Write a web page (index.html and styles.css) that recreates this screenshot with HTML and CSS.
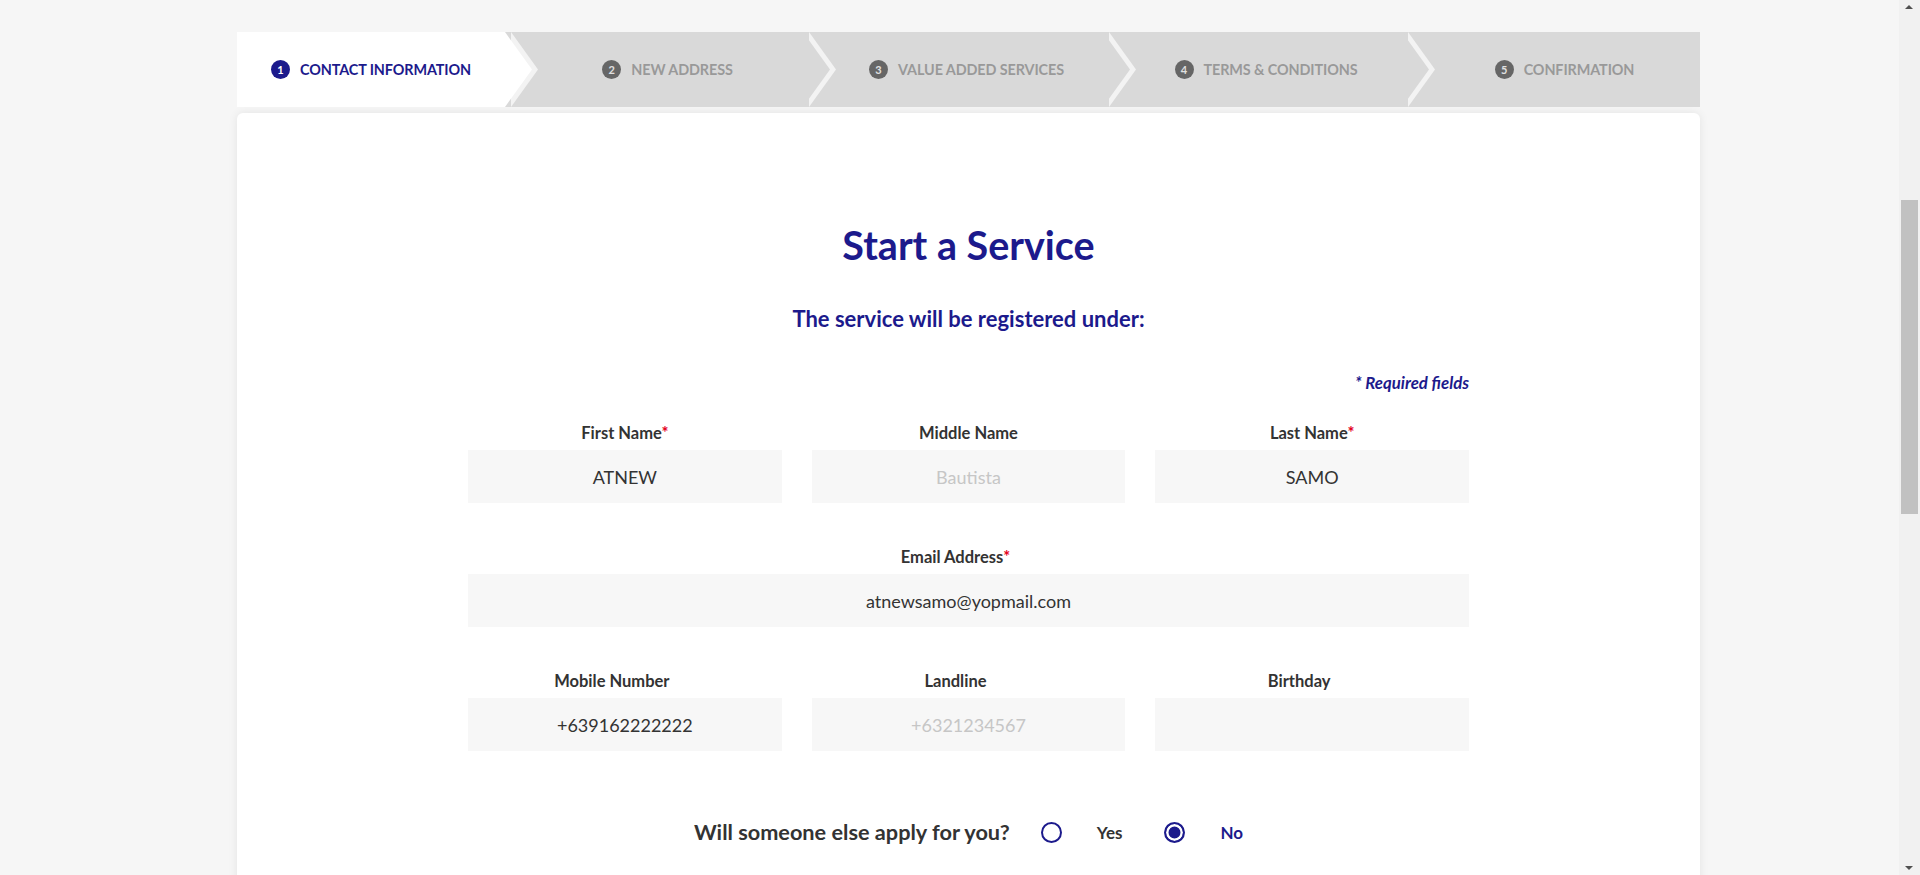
FILE: index.html
```html
<!DOCTYPE html>
<html lang="en">
<head>
<meta charset="utf-8">
<title>Start a Service</title>
<link rel="stylesheet" href="styles.css">
</head>
<body>
<div class="page">
  <main class="wizard">
    <ol class="stepper">
      <li class="step step-active"><span class="step-num">1</span><span class="step-label">CONTACT INFORMATION</span></li>
      <li class="step"><span class="step-num">2</span><span class="step-label">NEW ADDRESS</span></li>
      <li class="step"><span class="step-num">3</span><span class="step-label">VALUE ADDED SERVICES</span></li>
      <li class="step"><span class="step-num">4</span><span class="step-label">TERMS &amp; CONDITIONS</span></li>
      <li class="step step-last"><span class="step-num">5</span><span class="step-label">CONFIRMATION</span></li>
    </ol>

    <section class="card">
      <h1 class="title">Start a Service</h1>
      <p class="subtitle">The service will be registered under:</p>

      <form class="form">
        <p class="required-note">* Required fields</p>

        <div class="row row-three">
          <div class="field">
            <label class="field-label">First Name<span class="req">*</span></label>
            <input class="field-input" type="text" value="ATNEW">
          </div>
          <div class="field">
            <label class="field-label">Middle Name</label>
            <input class="field-input" type="text" placeholder="Bautista">
          </div>
          <div class="field">
            <label class="field-label">Last Name<span class="req">*</span></label>
            <input class="field-input" type="text" value="SAMO">
          </div>
        </div>

        <div class="row row-one row-offset">
          <div class="field">
            <label class="field-label">Email Address<span class="req">*</span></label>
            <input class="field-input" type="text" value="atnewsamo@yopmail.com">
          </div>
        </div>

        <div class="row row-three row-offset">
          <div class="field">
            <label class="field-label">Mobile Number</label>
            <input class="field-input" type="text" value="+639162222222">
          </div>
          <div class="field">
            <label class="field-label">Landline</label>
            <input class="field-input" type="text" placeholder="+6321234567">
          </div>
          <div class="field">
            <label class="field-label">Birthday</label>
            <input class="field-input" type="text">
          </div>
        </div>

        <div class="question">
          <span class="question-text">Will someone else apply for you?</span>
          <label class="opt"><input class="radio" type="radio" name="apply"><span class="opt-text">Yes</span></label>
          <label class="opt opt-on"><input class="radio" type="radio" name="apply" checked><span class="opt-text">No</span></label>
        </div>
      </form>
    </section>
  </main>
</div>

<div class="scrollbar">
  <span class="sb-arrow sb-up"></span>
  <span class="sb-thumb"></span>
  <span class="sb-arrow sb-down"></span>
</div>
</body>
</html>
```
FILE: styles.css
```css
html, body {
  margin: 0;
  padding: 0;
  height: 100%;
  overflow: hidden;
}

body {
  background: #f6f6f6;
  font-family: "Lato", "Open Sans", sans-serif;
  color: #333;
}

.page {
  padding: 32px 0 0 237px;
}

.wizard {
  width: 1463px;
}

/* ---------- stepper ---------- */
.stepper {
  display: flex;
  margin: 0;
  padding: 0;
  list-style: none;
  height: 75px;
}

.step {
  position: relative;
  display: flex;
  align-items: center;
  justify-content: center;
  gap: 10px;
  height: 75px;
  background: #d9d9d9;
  padding-left: 27px;
  box-sizing: border-box;
  color: #999;
  font-size: 14.4px;
  font-weight: 700;
  letter-spacing: -0.1px;
}

.step:nth-child(1) { width: 268px; z-index: 5; padding-left: 0; background: #fff; color: #1c1a8c; }
.step:nth-child(2) { width: 298px; z-index: 4; }
.step:nth-child(3) { width: 300px; z-index: 3; }
.step:nth-child(4) { width: 299px; z-index: 2; }
.step:nth-child(5) { flex: 1; z-index: 1; }

.step::before,
.step::after {
  content: "";
  position: absolute;
  top: 0;
  width: 27px;
  height: 100%;
  clip-path: polygon(0 0, 100% 50%, 0 100%);
}

.step::before {
  left: calc(100% + 6px);
  background: #f3f3f3;
}

.step::after {
  left: 100%;
  background: #d9d9d9;
}

.step-active::after { background: #fff; }
.step-last::before,
.step-last::after { display: none; }

.step-num {
  width: 19px;
  height: 19px;
  border-radius: 50%;
  background: #666;
  color: #e0e0e0;
  font-size: 11px;
  font-weight: 700;
  line-height: 19px;
  text-align: center;
  letter-spacing: 0;
  flex-shrink: 0;
}

.step-active .step-num {
  background: #1c1a8c;
  color: #fff;
}

.step-label {
  white-space: nowrap;
}

/* ---------- card ---------- */
.card {
  margin-top: 6px;
  background: #fff;
  border-radius: 6px;
  box-shadow: 0 0 10px rgba(0, 0, 0, 0.08);
  padding: 108px 0 200px;
  display: flex;
  flex-direction: column;
  align-items: center;
}

.title {
  margin: 0;
  font-size: 39.5px;
  line-height: 48px;
  font-weight: 700;
  color: #1c1a8c;
}

.subtitle {
  margin: 36px 0 0;
  font-size: 22px;
  line-height: 28px;
  font-weight: 700;
  color: #1c1a8c;
}

.form {
  width: 1001px;
  margin-top: 40px;
}

.required-note {
  margin: 0;
  text-align: right;
  font-size: 16.8px;
  line-height: 20px;
  font-style: italic;
  font-weight: 700;
  color: #1c1a8c;
}

.row {
  display: grid;
  column-gap: 30px;
  margin-top: 44px;
}

.required-note + .row {
  margin-top: 30px;
}

.row-three { grid-template-columns: 1fr 1fr 1fr; }
.row-one { grid-template-columns: 1fr; }

.field {
  display: flex;
  flex-direction: column;
}

.field-label {
  display: block;
  text-align: center;
  font-size: 16.5px;
  line-height: 20px;
  font-weight: 700;
  color: #333;
  margin-bottom: 7px;
}

.row-offset .field-label {
  padding-right: 26px;
}

.req {
  color: #e3001b;
}

.field-input {
  height: 53px;
  border: none;
  outline: none;
  background: #f7f7f7;
  margin: 0;
  padding: 0 10px;
  box-sizing: border-box;
  width: 100%;
  text-align: center;
  font-family: "Lato", "Open Sans", sans-serif;
  font-size: 18px;
  color: #333;
}

.field-input::placeholder {
  color: #c6c6c6;
  opacity: 1;
}

/* ---------- question ---------- */
.question {
  display: flex;
  justify-content: center;
  align-items: center;
  margin-top: 66px;
  height: 30px;
}

.question-text {
  font-size: 21.7px;
  line-height: 30px;
  font-weight: 700;
  color: #333;
  margin-right: 31px;
}

.opt {
  display: flex;
  align-items: center;
  gap: 35px;
  font-size: 17px;
  font-weight: 700;
  color: #333;
}

.opt + .opt {
  margin-left: 42px;
}

.opt-on {
  color: #1c1a8c;
}

.radio {
  appearance: none;
  -webkit-appearance: none;
  margin: 0;
  width: 21px;
  height: 21px;
  border: 2px solid #1c1a8c;
  border-radius: 50%;
  box-sizing: border-box;
  background: #fff;
}

.radio:checked {
  background: #1c1a8c;
  box-shadow: inset 0 0 0 2.5px #fff;
}

/* ---------- fake window scrollbar ---------- */
.scrollbar {
  position: fixed;
  top: 0;
  right: 0;
  width: 21px;
  height: 100%;
  background: #f1f1f1;
}

.sb-thumb {
  position: absolute;
  left: 2px;
  right: 2px;
  top: 200px;
  height: 314px;
  background: #c1c1c1;
}

.sb-arrow {
  position: absolute;
  left: 6px;
  width: 0;
  height: 0;
  border-left: 4.5px solid transparent;
  border-right: 4.5px solid transparent;
}

.sb-up {
  top: 5px;
  border-bottom: 4px solid #505050;
}

.sb-down {
  bottom: 5px;
  border-top: 4px solid #505050;
}
```
